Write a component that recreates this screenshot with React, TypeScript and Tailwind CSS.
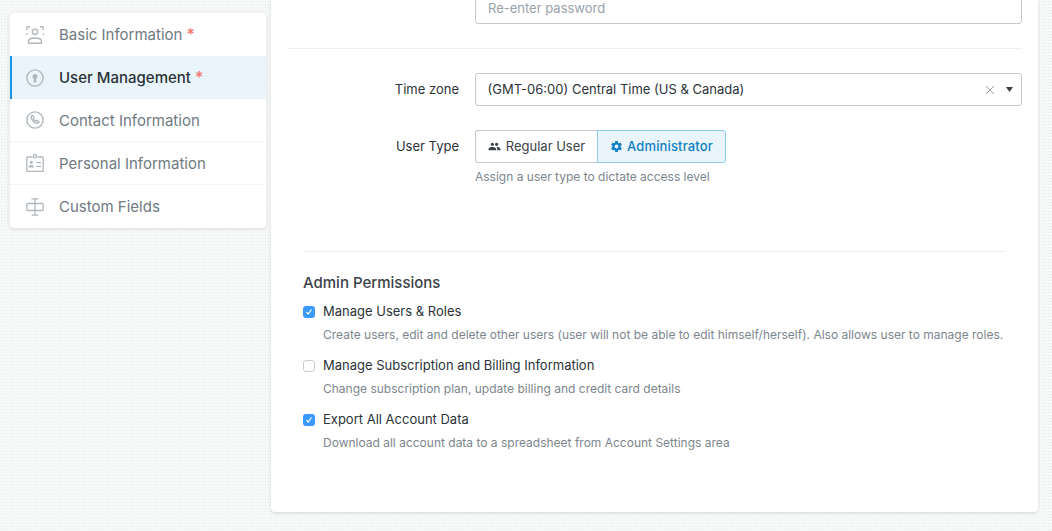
import React from "react";

const Star = () => <span className="ml-[4px] -mt-[2px] text-[#f4736f] text-[16px] font-medium leading-none">*</span>;

const C = "#b0b8be";

const IconBasic = () => (
  <svg width="18" height="18" viewBox="0 0 18 18" fill="none" stroke={C} strokeWidth="1.400">
    <path d="M.8 4V1.800a1 1 0 0 1 1-1H4M14 .8h2.200a1 1 0 0 1 1 1V4M.8 7.500V9M17.200 7.500V9" />
    <circle cx="9" cy="5.800" r="2.700" />
    <path d="M2.500 17.300v-2c0-2.300 2.800-3.300 6.500-3.300s6.500 1 6.500 3.300v2z" />
  </svg>
);
const IconLock = () => (
  <svg width="18" height="18" viewBox="0 0 18 18" fill="none">
    <circle cx="9" cy="9" r="8.100" stroke={C} strokeWidth="1.400" />
    <circle cx="9" cy="7.500" r="2.500" fill={C} />
    <path d="M8 8h2l.5 5.500h-3z" fill={C} />
  </svg>
);
const IconPhone = () => (
  <svg width="18" height="18" viewBox="0 0 18 18" fill="none" stroke={C} strokeWidth="1.400">
    <circle cx="9" cy="9" r="8.100" />
    <path d="M5.700 4.700c-1 1.400-.2 3.700 1.500 5.500 1.700 1.700 4 2.600 5.400 1.600l.5-1.100-2.300-1.300-1 .7C8.900 9.700 7.800 8.600 7.400 7.600l.6-1-1.200-2.300z" />
  </svg>
);
const IconCard = () => (
  <svg width="18" height="18" viewBox="0 0 18 18" fill="none" stroke={C} strokeWidth="1.300">
    <path d="M6.500 3H1.500a.7.7 0 0 0-.7.700v13a.7.7 0 0 0 .7.700h15a.7.7 0 0 0 .7-.7v-13a.7.7 0 0 0-.7-.7h-5" />
    <circle cx="9" cy="2.200" r="1.600" />
    <circle cx="5.300" cy="8.300" r="1.500" fill={C} stroke="none" />
    <path d="M2.800 13.600v-1.100c0-1.100 1.100-1.600 2.500-1.600s2.500.5 2.500 1.600v1.100z" fill={C} stroke="none" />
    <path d="M10.300 8.600h4.700M10.300 12.400h4.700" />
  </svg>
);
const IconField = () => (
  <svg width="18" height="18" viewBox="0 0 18 18" fill="none" stroke={C} strokeWidth="1.300">
    <path d="M5.500.8h7M9 .8v16.400M5.800 17.200h6.400" />
    <rect x=".8" y="5.500" width="16.400" height="7" rx="1" />
  </svg>
);

const items = [
  { label: "Basic Information", icon: <IconBasic />, star: true },
  { label: "User Management", icon: <IconLock />, star: true, active: true },
  { label: "Contact Information", icon: <IconPhone />, dot: true },
  { label: "Personal Information", icon: <IconCard />, dot: true },
  { label: "Custom Fields", icon: <IconField /> },
];

function Check({ checked, title, desc }: { checked: boolean; title: string; desc: string }) {
  return (
    <div className="mb-[13px]">
      <div className="flex items-center h-[18px]">
        {checked ? (
          <span className="w-3 h-3 rounded-[3px] bg-[#3b99fc] flex items-center justify-center mr-[8px]">
            <svg width="8" height="8" viewBox="0 0 8 8" fill="none" stroke="#fff" strokeWidth="1.200">
              <path d="M1.500 4.200 3.200 6 6.500 1.500" />
            </svg>
          </span>
        ) : (
          <span className="w-3 h-3 rounded-[3px] bg-white border border-[#c9cdd1] mr-[8px]" />
        )}
        <span className="text-[13px] text-[#2c3338]">{title}</span>
      </div>
      <div className="mt-[5px] pl-[20px] text-[12px] leading-[18px] text-[#7c868d]">{desc}</div>
    </div>
  );
}

export default function App() {
  return (
    <div
      className="h-[531px] w-[1052px] overflow-hidden bg-[#f7f8f8] bg-[radial-gradient(#e8ecee_0.7px,transparent_0.8px)] bg-[length:3px_3px] flex items-start pl-[10px]"
      style={{ fontFamily: "Inter, 'Liberation Sans', sans-serif" }}
    >
      <aside className="w-[256px] h-[215px] mt-[13px] bg-white rounded-[4px] shadow-[0_1px_4px_rgba(0,0,0,0.12)] overflow-hidden shrink-0">
        {items.map((it) => (
          <div
            key={it.label}
            className={
              it.active
                ? "h-[43px] flex items-center pl-[14px] border-l-2 border-[#1a94e6] bg-[#e9f5fb] text-[#2c3338] font-medium"
                : it.dot
                ? "h-[43px] flex items-center pl-[16px] border-b border-dotted border-[#e8ecee] text-[#6f7a82]"
                : "h-[43px] flex items-center pl-[16px] text-[#6f7a82]"
            }
          >
            <span className="w-[18px] h-[18px] mr-[15px] flex-none">{it.icon}</span>
            <span className="text-[15px] pt-[2px]">{it.label}</span>
            {it.star && <Star />}
          </div>
        ))}
      </aside>

      <main className="ml-[5px] w-[767px] h-[512px] bg-white rounded-b-[4px] shadow-[0_1px_3px_rgba(0,0,0,0.15)] shrink-0 overflow-hidden">
        <div className="pl-[204px] pr-[16px] -mt-[8px]">
          <div className="h-[32px] border border-[#c4c9cd] rounded-[3px] flex items-center px-3 pt-[2px] text-[13px] text-[#9aa3aa]">
            Re-enter password
          </div>
        </div>
        <div className="ml-[17px] mr-[16px] mt-[24px] border-t border-[#eef1f2]" />

        <div className="mt-[24px] flex items-center pr-[16px]">
          <label className="w-[188px] text-right text-[13px] text-[#2c3338]">Time zone</label>
          <div className="ml-[16px] flex-1 h-[33px] border border-[#c4c9cd] rounded-[3px] flex items-center pl-[11.500px] pr-[8px] text-[13px] text-[#2c3338]">
            <span className="flex-1">(GMT-06:00) Central Time (US &amp; Canada)</span>
            <svg width="10" height="10" viewBox="0 0 10 10" stroke="#9aa3aa" strokeWidth="1" className="mr-[11px]">
              <path d="M1 1l8 8M9 1l-8 8" />
            </svg>
            <svg width="7" height="5" viewBox="0 0 7 5" fill="#3a4046">
              <path d="M0 0h7L3.500 5z" />
            </svg>
          </div>
        </div>

        <div className="mt-[24px] flex items-center pr-[16px]">
          <label className="w-[188px] text-right text-[13px] text-[#2c3338]">User Type</label>
          <div className="ml-[16px] flex h-[33px] text-[13px]">
            <div className="w-[122px] border border-[#c4c9cd] border-r-0 rounded-l-[3px] flex items-center justify-center text-[#3a4248]">
              <svg width="13" height="13" viewBox="0 0 24 24" fill="#3a4248" className="mr-[5px]">
                <path d="M16 11c1.660 0 3-1.340 3-3s-1.340-3-3-3-3 1.340-3 3 1.340 3 3 3zm-8 0c1.660 0 3-1.340 3-3S9.660 5 8 5 5 6.340 5 8s1.340 3 3 3zm0 2c-2.330 0-7 1.170-7 3.500V19h14v-2.500C15 14.170 10.330 13 8 13zm8 0c-.290 0-.620.020-.970.050 1.160.840 1.970 1.970 1.970 3.450V19h6v-2.500c0-2.330-4.670-3.500-7-3.500z" />
              </svg>
              Regular User
            </div>
            <div className="w-[129px] border border-[#8ccbf0] bg-[#e9f5fb] rounded-r-[3px] flex items-center justify-center text-[#0f7fc4] font-medium tracking-[0.15px]">
              <svg width="13" height="13" viewBox="0 0 24 24" fill="#0f7fc4" className="mr-[4px]">
                <path d="M19.430 12.980c.040-.320.070-.640.070-.980s-.030-.660-.070-.980l2.110-1.650c.190-.150.240-.420.120-.640l-2-3.460c-.120-.220-.390-.300-.610-.220l-2.490 1c-.520-.400-1.080-.730-1.690-.980l-.380-2.650A.488.488 0 0 0 14 2h-4c-.250 0-.460.180-.490.420l-.380 2.650c-.610.250-1.170.590-1.690.980l-2.490-1c-.230-.090-.490 0-.610.220l-2 3.460c-.130.220-.070.490.120.640l2.110 1.650c-.040.320-.070.650-.070.980s.030.660.070.980l-2.110 1.650c-.190.150-.240.420-.120.640l2 3.460c.120.220.390.300.610.220l2.490-1c.520.400 1.080.730 1.690.980l.380 2.650c.030.240.240.420.490.420h4c.250 0 .460-.180.490-.420l.380-2.650c.610-.250 1.170-.590 1.690-.980l2.490 1c.230.090.490 0 .610-.220l2-3.460c.120-.220.070-.490-.120-.640l-2.110-1.650zM12 15.500c-1.930 0-3.500-1.570-3.500-3.500s1.570-3.500 3.500-3.500 3.500 1.570 3.500 3.500-1.570 3.500-3.500 3.500z" />
              </svg>
              Administrator
            </div>
          </div>
        </div>
        <div className="mt-[5px] ml-[204px] text-[12px] leading-[18px] text-[#7c868d]">
          Assign a user type to dictate access level
        </div>

        <div className="ml-[32px] mr-[32px] mt-[65px] border-t border-[#eef1f2]" />

        <div className="pl-[32px] pr-[16px]">
          <h3 className="mt-[21px] mb-[10px] text-[15px] leading-[20px] font-medium text-[#3a4248]">Admin Permissions</h3>
          <Check
            checked
            title="Manage Users & Roles"
            desc="Create users, edit and delete other users (user will not be able to edit himself/herself). Also allows user to manage roles."
          />
          <Check
            checked={false}
            title="Manage Subscription and Billing Information"
            desc="Change subscription plan, update billing and credit card details"
          />
          <Check
            checked
            title="Export All Account Data"
            desc="Download all account data to a spreadsheet from Account Settings area"
          />
        </div>
      </main>
    </div>
  );
}
